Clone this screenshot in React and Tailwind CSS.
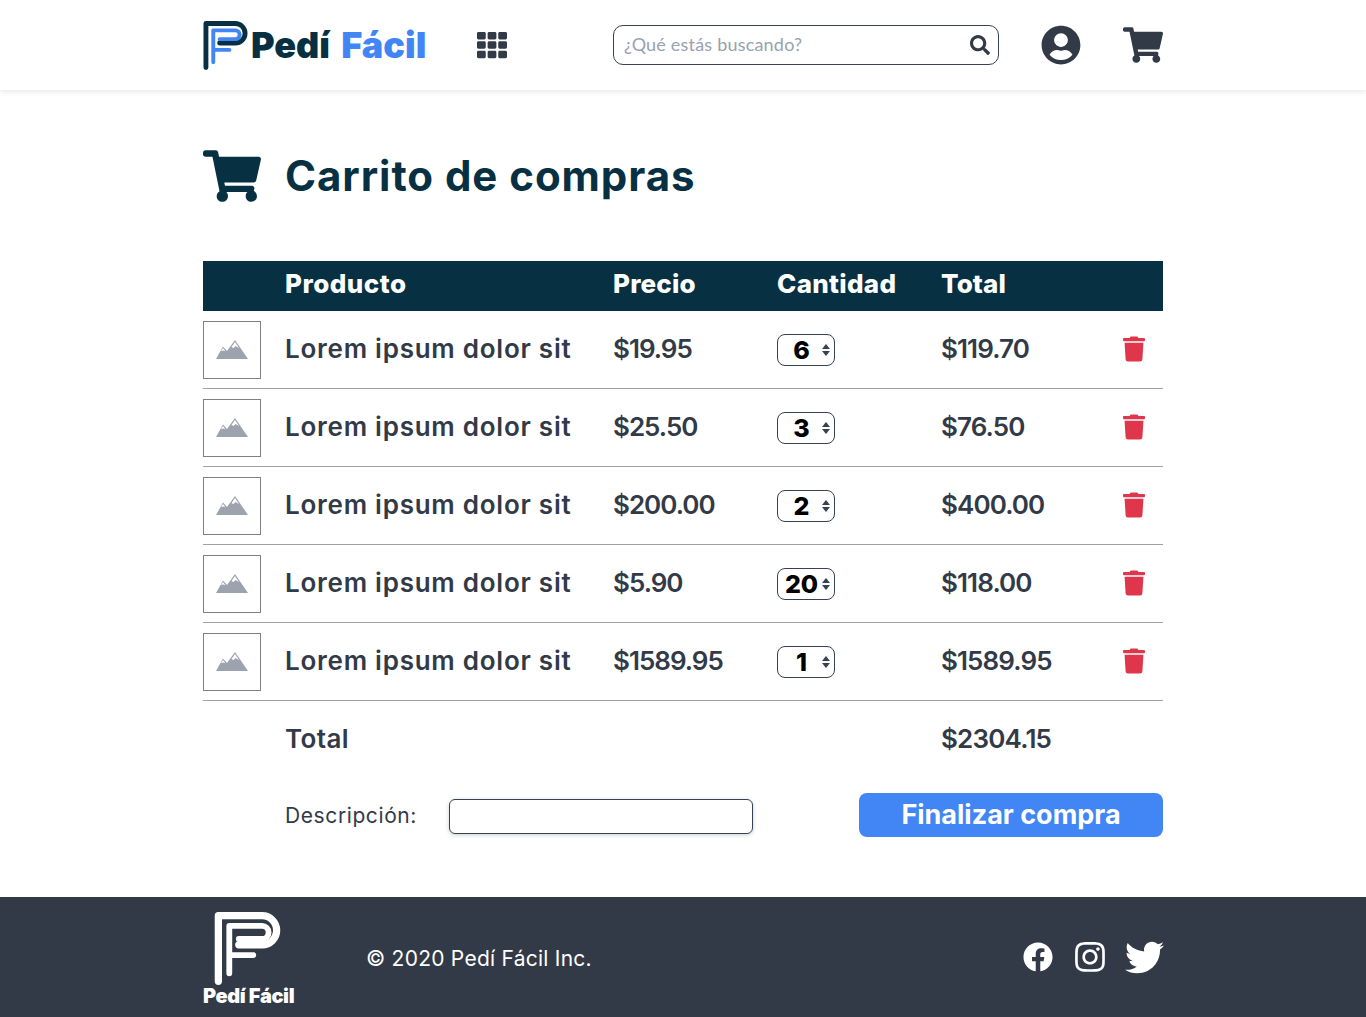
import { FaFacebook, FaInstagram, FaSearch, FaShoppingCart, FaTh, FaTrash, FaTwitter, FaUserCircle } from 'react-icons/fa';

const items = [
  { name: 'Lorem ipsum dolor sit', price: '$19.95', qty: 6, total: '$119.70' },
  { name: 'Lorem ipsum dolor sit', price: '$25.50', qty: 3, total: '$76.50' },
  { name: 'Lorem ipsum dolor sit', price: '$200.00', qty: 2, total: '$400.00' },
  { name: 'Lorem ipsum dolor sit', price: '$5.90', qty: 20, total: '$118.00' },
  { name: 'Lorem ipsum dolor sit', price: '$1589.95', qty: 1, total: '$1589.95' },
];

const cols = 'grid grid-cols-[82px_328px_164px_164px_182px_40px] items-center';

function LogoMark({ outer, inner, className }) {
  return (
    <svg viewBox="0 0 46 50" className={className} fill="none" strokeLinecap="round" strokeLinejoin="round">
      <path d="M3 47.500V2.500H33A10 10 0 0 1 33 22.500H17" stroke={outer} strokeWidth="5" />
      <path d="M10.500 42V9.500H33a4.500 4.500 0 0 1 0 9H17M10.500 29.500H27" stroke={inner} strokeWidth="4" />
    </svg>
  );
}

function Thumb() {
  return (
    <div className="w-[58px] h-[58px] border border-[#808080] flex items-center justify-center">
      <svg viewBox="0 0 32 20" className="w-8 h-5">
        <path d="M0 19 L7 6.500 L11 11 L19 0 L32 19Z" fill="#9ca3af" />
        <path d="M5 11 L7 8 L9.500 11.500 L7.500 10.500Z M15.500 7 L19 2 L23 8 L19.500 6 L17.500 8Z" fill="#fff" />
      </svg>
    </div>
  );
}

function QtySelect({ value }) {
  return (
    <div className="w-[58px] h-8 border border-gray-700 rounded-lg flex items-center relative">
      <span className="w-[47px] pt-[2px] text-center text-[25px] font-extrabold text-black leading-none">{value}</span>
      <span className="absolute right-[4px] top-[9px] flex flex-col gap-[2px]">
        <span className="block w-0 h-0 border-x-[4px] border-x-transparent border-b-[5px] border-b-gray-700" />
        <span className="block w-0 h-0 border-x-[4px] border-x-transparent border-t-[5px] border-t-gray-700" />
      </span>
    </div>
  );
}

export default function App() {
  return (
    <div className="min-h-[1017px] bg-white flex flex-col font-['Inter',sans-serif] text-[#323a47]">
      {/* Header */}
      <header className="h-[90px] shadow-[0_1px_6px_rgba(0,0,0,0.12)] flex justify-center">
        <div className="w-[960px] flex items-center">
          <LogoMark outer="#073143" inner="#4285f4" className="w-[45px] h-[49px]" />
          <span className="ml-[3px] w-[226px] text-[36px] font-black leading-none whitespace-nowrap">
            <span className="text-[#073143]">Pedí</span> <span className="ml-1 text-[#4285f4]">Fácil</span>
          </span>
          <FaTh className="text-[#323a47] w-[30px] h-[30px]" />
          <div className="ml-[106px] w-[386px] h-10 border border-gray-700 rounded-[10px] flex items-center justify-between pl-[10px] pr-[8px]">
            <span className="font-['Lato',sans-serif] text-[18px] tracking-[0.2px] text-gray-400 pb-[2px]">¿Qué estás buscando?</span>
            <FaSearch className="text-[#323a47] w-5 h-5" />
          </div>
          <FaUserCircle className="ml-[42px] text-[#323a47] w-10 h-10" />
          <FaShoppingCart className="ml-[42px] text-[#323a47] w-10 h-9" />
        </div>
      </header>

      <main className="flex-1 flex justify-center">
        <div className="w-[960px]">
          <div className="mt-[54px] h-[64px] flex items-center">
            <FaShoppingCart className="text-[#073143] w-[58px] h-[52px]" />
            <h1 className="ml-6 pb-[2px] text-[42px] font-bold text-[#073143] tracking-[0.95px]">Carrito de compras</h1>
          </div>

          <div className={`${cols} mt-[53px] h-[50px] bg-[#073143] text-white text-[26px] font-extrabold pb-[5px]`}>
            <span />
            <span className="tracking-[0.5px]">Producto</span>
            <span className="tracking-[0.2px]">Precio</span>
            <span className="tracking-[0.3px]">Cantidad</span>
            <span className="tracking-[0.1px]">Total</span>
            <span />
          </div>

          {items.map((item, idx) => (
            <div key={idx} className={`${cols} h-[78px] border-b border-[#a0a0a0] text-[26px] font-semibold`}>
              <Thumb />
              <span className="whitespace-nowrap tracking-[0.75px] pb-[2px]">{item.name}</span>
              <span className="tracking-[-1px] pb-[2px]">{item.price}</span>
              <QtySelect value={item.qty} />
              <span className="tracking-[-0.9px] pb-[2px]">{item.total}</span>
              <FaTrash className="text-[#e0364c] w-[22px] h-[26px] mb-[1px]" />
            </div>
          ))}

          <div className={`${cols} h-[76px] text-[26px] font-semibold`}>
            <span />
            <span className="tracking-[0.4px] pb-[1px]">Total</span>
            <span />
            <span />
            <span className="tracking-[-0.8px] pb-[1px]">$2304.15</span>
            <span />
          </div>

          <div className="mt-[16px] h-[44px] flex items-center pl-[82px]">
            <span className="w-[164px] text-[21px] tracking-[0.6px] pt-[2px]">Descripción:</span>
            <input className="w-[304px] h-[35px] mt-[2px] border border-gray-700 rounded-md shadow-[0_1px_4px_rgba(0,0,0,0.2)]" />
            <button className="ml-auto w-[304px] h-[44px] bg-[#4285f4] text-white rounded-lg text-[27px] font-bold">
              Finalizar compra
            </button>
          </div>
        </div>
      </main>

      {/* Footer */}
      <footer className="h-[120px] bg-[#323a47] flex justify-center">
        <div className="w-[960px] flex items-center">
          <div className="w-[163px] pt-[4px] flex flex-col items-start">
            <LogoMark outer="#fff" inner="#fff" className="ml-[11px] w-[67px] h-[73px]" />
            <span className="font-black text-white text-[20px] leading-none mt-[1px] tracking-[-0.4px] whitespace-nowrap">Pedí Fácil</span>
          </div>
          <span className="text-white text-[21px] tracking-[0.25px] pt-[3px]">© 2020 Pedí Fácil Inc.</span>
          <div className="ml-auto flex items-center">
            <FaFacebook className="text-white w-[30px] h-[30px]" />
            <FaInstagram className="ml-[20px] text-white w-[34px] h-[34px]" />
            <FaTwitter className="ml-[18px] text-white w-[39px] h-[39px] -mr-[1px]" />
          </div>
        </div>
      </footer>
    </div>
  );
}
